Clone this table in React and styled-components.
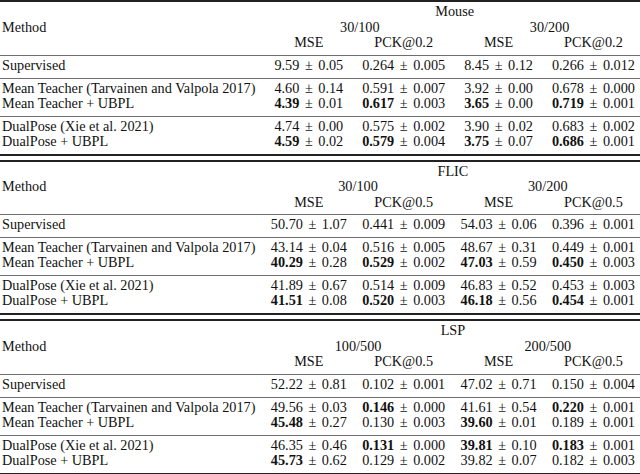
import React from "react";
import styled, { createGlobalStyle } from "styled-components";

const GlobalStyle = createGlobalStyle`
  body {
    margin: 0;
    background: #fff;
  }
`;

const Page = styled.div`
  width: 640px;
  display: flex;
  flex-direction: column;
  gap: 4px;
  font-family: "Liberation Serif", "Times New Roman", serif;
  font-size: 14.25px;
  color: #111;
`;

// one tabular per dataset, columns spread like tabular* with \fill
const Section = styled.div`
  display: grid;
  grid-template-columns: repeat(5, auto);
  justify-content: space-between;
  padding: 2px 5px 5px 2px;
  border-top: 2px solid #222;
  border-bottom: 2px solid #222;
`;

const Cell = styled.div`
  grid-column: span ${({ $span }) => $span || 1};
  text-align: ${({ $left }) => ($left ? "left" : "center")};
  line-height: ${({ $head }) => ($head ? "15.5px" : "15px")};
  white-space: nowrap;
`;

const MidRule = styled.div`
  grid-column: 1 / -1;
  height: 1px;
  background: #6e6e6e;
  margin: ${({ $above }) => $above}px -5px 2px -2px;
`;

const Best = styled.b`
  font-weight: 700;
`;

const Pm = styled.span`
  margin: 0 2px;
`;

const methods = [
  "Supervised",
  "Mean Teacher (Tarvainen and Valpola 2017)",
  "Mean Teacher + UBPL",
  "DualPose (Xie et al. 2021)",
  "DualPose + UBPL",
];

// rows grouped as they are separated by mid rules
const groups = [[0], [1, 2], [3, 4]];

// a leading * marks the best result
const sections = [
  {
    name: "Mouse",
    splits: ["30/100", "30/200"],
    metric: "PCK@0.2",
    rows: [
      ["9.59 ± 0.05", "0.264 ± 0.005", "8.45 ± 0.12", "0.266 ± 0.012"],
      ["4.60 ± 0.14", "0.591 ± 0.007", "3.92 ± 0.00", "0.678 ± 0.000"],
      ["*4.39 ± 0.01", "*0.617 ± 0.003", "*3.65 ± 0.00", "*0.719 ± 0.001"],
      ["4.74 ± 0.00", "0.575 ± 0.002", "3.90 ± 0.02", "0.683 ± 0.002"],
      ["*4.59 ± 0.02", "*0.579 ± 0.004", "*3.75 ± 0.07", "*0.686 ± 0.001"],
    ],
  },
  {
    name: "FLIC",
    splits: ["30/100", "30/200"],
    metric: "PCK@0.5",
    rows: [
      ["50.70 ± 1.07", "0.441 ± 0.009", "54.03 ± 0.06", "0.396 ± 0.001"],
      ["43.14 ± 0.04", "0.516 ± 0.005", "48.67 ± 0.31", "0.449 ± 0.001"],
      ["*40.29 ± 0.28", "*0.529 ± 0.002", "*47.03 ± 0.59", "*0.450 ± 0.003"],
      ["41.89 ± 0.67", "0.514 ± 0.009", "46.83 ± 0.52", "0.453 ± 0.003"],
      ["*41.51 ± 0.08", "*0.520 ± 0.003", "*46.18 ± 0.56", "*0.454 ± 0.001"],
    ],
  },
  {
    name: "LSP",
    splits: ["100/500", "200/500"],
    metric: "PCK@0.5",
    rows: [
      ["52.22 ± 0.81", "0.102 ± 0.001", "47.02 ± 0.71", "0.150 ± 0.004"],
      ["49.56 ± 0.03", "*0.146 ± 0.000", "41.61 ± 0.54", "*0.220 ± 0.001"],
      ["*45.48 ± 0.27", "0.130 ± 0.003", "*39.60 ± 0.01", "0.189 ± 0.001"],
      ["46.35 ± 0.46", "*0.131 ± 0.000", "*39.81 ± 0.10", "*0.183 ± 0.001"],
      ["*45.73 ± 0.62", "0.129 ± 0.002", "39.82 ± 0.07", "0.182 ± 0.003"],
    ],
  },
];

const Value = ({ text }) => {
  const bold = text.startsWith("*");
  const [mean, std] = text.replace("*", "").split(" ± ");
  return (
    <Cell>
      {bold ? <Best>{mean}</Best> : mean}
      <Pm> ± </Pm>
      {std}
    </Cell>
  );
};

const ResultTable = ({ section }) => (
  <Section>
    <Cell $head $left />
    <Cell $head $span={4}>{section.name}</Cell>

    <Cell $head $left>Method</Cell>
    {section.splits.map((s) => (
      <Cell $head $span={2} key={s}>{s}</Cell>
    ))}

    <Cell $head $left />
    <Cell $head>MSE</Cell>
    <Cell $head>{section.metric}</Cell>
    <Cell $head>MSE</Cell>
    <Cell $head>{section.metric}</Cell>

    {groups.map((g, gi) => (
      <React.Fragment key={gi}>
        <MidRule $above={gi === 0 ? 4 : 5} />
        {g.map((ri) => (
          <React.Fragment key={ri}>
            <Cell $left>{methods[ri]}</Cell>
            {section.rows[ri].map((v, ci) => (
              <Value key={ci} text={v} />
            ))}
          </React.Fragment>
        ))}
      </React.Fragment>
    ))}
  </Section>
);

export default function App() {
  return (
    <>
      <GlobalStyle />
      <Page>
        {sections.map((s) => (
          <ResultTable key={s.name} section={s} />
        ))}
      </Page>
    </>
  );
}
